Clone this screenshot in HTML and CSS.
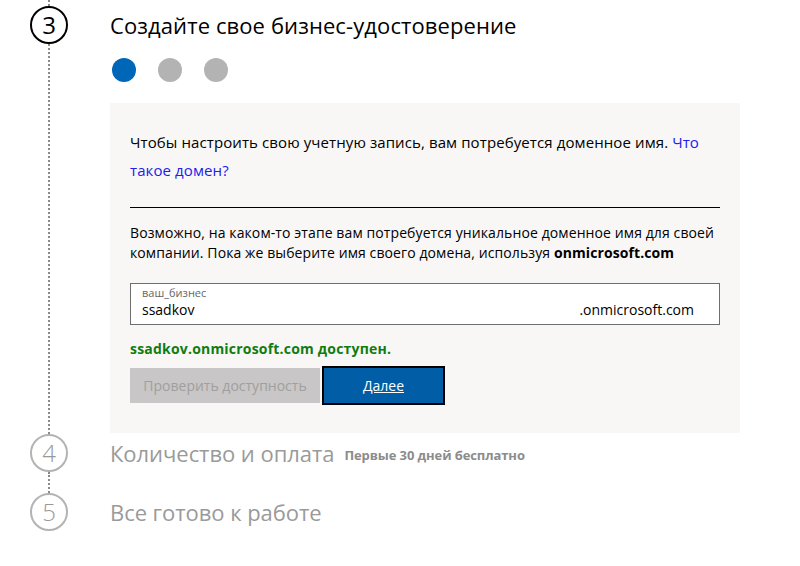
FILE: index.html
```html
<!DOCTYPE html>
<html lang="ru">
<head>
<meta charset="utf-8">
<link rel="stylesheet" href="styles.css">
</head>
<body>
<div class="steps">
  <div class="step step-active">
    <div class="rail">
      <div class="line line-top"></div>
      <div class="num num-active">3</div>
      <div class="line line-fill"></div>
    </div>
    <div class="content">
      <h2 class="title">Создайте свое бизнес-удостоверение</h2>
      <div class="dots">
        <span class="dot dot-on"></span>
        <span class="dot"></span>
        <span class="dot"></span>
      </div>
      <div class="panel">
        <p class="intro">Чтобы настроить свою учетную запись, вам потребуется доменное имя. <a class="link" href="#">Что такое домен?</a></p>
        <hr class="rule">
        <p class="desc">Возможно, на каком-то этапе вам потребуется уникальное доменное имя для своей компании. Пока же выберите имя своего домена, используя <b>onmicrosoft.com</b></p>
        <div class="field">
          <div class="field-main">
            <span class="field-label">ваш_бизнес</span>
            <span class="field-value">ssadkov</span>
          </div>
          <span class="field-suffix">.onmicrosoft.com</span>
        </div>
        <p class="ok">ssadkov.onmicrosoft.com доступен.</p>
        <div class="buttons">
          <button class="btn btn-gray" type="button">Проверить доступность</button>
          <button class="btn btn-blue" type="button"><u>Далее</u></button>
        </div>
      </div>
    </div>
  </div>
  <div class="step">
    <div class="rail">
      <div class="num">4</div>
      <div class="line line-gap"></div>
    </div>
    <div class="content">
      <h2 class="title title-muted">Количество и оплата <small class="note">Первые 30 дней бесплатно</small></h2>
    </div>
  </div>
  <div class="step">
    <div class="rail">
      <div class="num">5</div>
    </div>
    <div class="content">
      <h2 class="title title-muted">Все готово к работе</h2>
    </div>
  </div>
</div>
</body>
</html>
```
FILE: styles.css
```css
html, body {
  margin: 0;
  padding: 0;
  background: #ffffff;
}
body {
  font-family: "Open Sans", "Noto Sans", sans-serif;
  color: #000;
  width: 800px;
  height: 566px;
  overflow: hidden;
}
.steps {
  display: flex;
  flex-direction: column;
}
.step {
  display: grid;
  grid-template-columns: 110px 1fr;
}
.rail {
  display: flex;
  flex-direction: column;
  align-items: center;
  width: 98px;
}
.line {
  width: 0;
  border-left: 2px dotted #8a8a8a;
}
.line-top { height: 6px; }
.line-fill { flex: 1; }
.line-gap { height: 21px; }
.num {
  box-sizing: border-box;
  width: 38px;
  height: 38px;
  border: 2px solid #b3b3b3;
  border-radius: 50%;
  display: flex;
  align-items: center;
  justify-content: center;
  font-size: 24px;
  font-weight: 300;
  color: #999;
  line-height: 1;
}
.num-active {
  border-color: #000;
  color: #000;
  font-weight: 400;
}
.content {
  display: flex;
  flex-direction: column;
}
.title {
  margin: 0;
  height: 38px;
  display: flex;
  align-items: center;
  font-size: 22px;
  font-weight: 400;
  letter-spacing: 0.1px;
  white-space: nowrap;
}
.step-active .title {
  margin-top: 6px;
}
.title-muted {
  color: #9a9a9a;
  letter-spacing: -0.05px;
}
.note {
  font-size: 13px;
  font-weight: 700;
  color: #8c8c8c;
  margin-left: 10px;
  margin-top: 4px;
  letter-spacing: -0.1px;
}
.dots {
  display: flex;
  gap: 22px;
  margin: 14px 0 21px 2px;
}
.dot {
  width: 24px;
  height: 24px;
  border-radius: 50%;
  background: #b3b3b3;
}
.dot-on { background: #0067b8; }
.panel {
  width: 630px;
  box-sizing: border-box;
  background: #f8f7f6;
  padding: 25px 20px 30px;
  margin-bottom: 1px;
  font-size: 14px;
}
.intro {
  margin: 0;
  font-size: 15px;
  letter-spacing: 0.1px;
  line-height: 28px;
}
.link {
  color: #2020ee;
  text-decoration: none;
}
.rule {
  border: 0;
  border-top: 1px solid #000;
  margin: 23px 0 15px;
}
.desc {
  margin: 0 0 20px;
  line-height: 20px;
  letter-spacing: 0.1px;
}
.field {
  box-sizing: border-box;
  height: 42px;
  border: 1px solid #6e6e6e;
  background: #fff;
  display: flex;
  align-items: flex-end;
  padding: 0 25px 4px 11px;
}
.field-main {
  flex: 1;
  display: flex;
  flex-direction: column;
}
.field-label {
  font-size: 11px;
  color: #666;
  line-height: 14px;
}
.field-value, .field-suffix {
  font-size: 14px;
  line-height: 20px;
}
.ok {
  margin: 14px 0 9px;
  color: #107c10;
  font-weight: 700;
  line-height: 20px;
  letter-spacing: 0.2px;
}
.buttons {
  display: flex;
  align-items: center;
  gap: 4px;
}
.btn {
  font-family: inherit;
  font-size: 14px;
  border: 0;
  height: 35px;
  padding: 0;
}
.btn-gray {
  width: 190px;
  background: #c8c6c6;
  color: #a19f9d;
}
.btn-blue {
  width: 119px;
  background: #005da6;
  color: #fff;
  outline: 2px solid #000;
}
```
